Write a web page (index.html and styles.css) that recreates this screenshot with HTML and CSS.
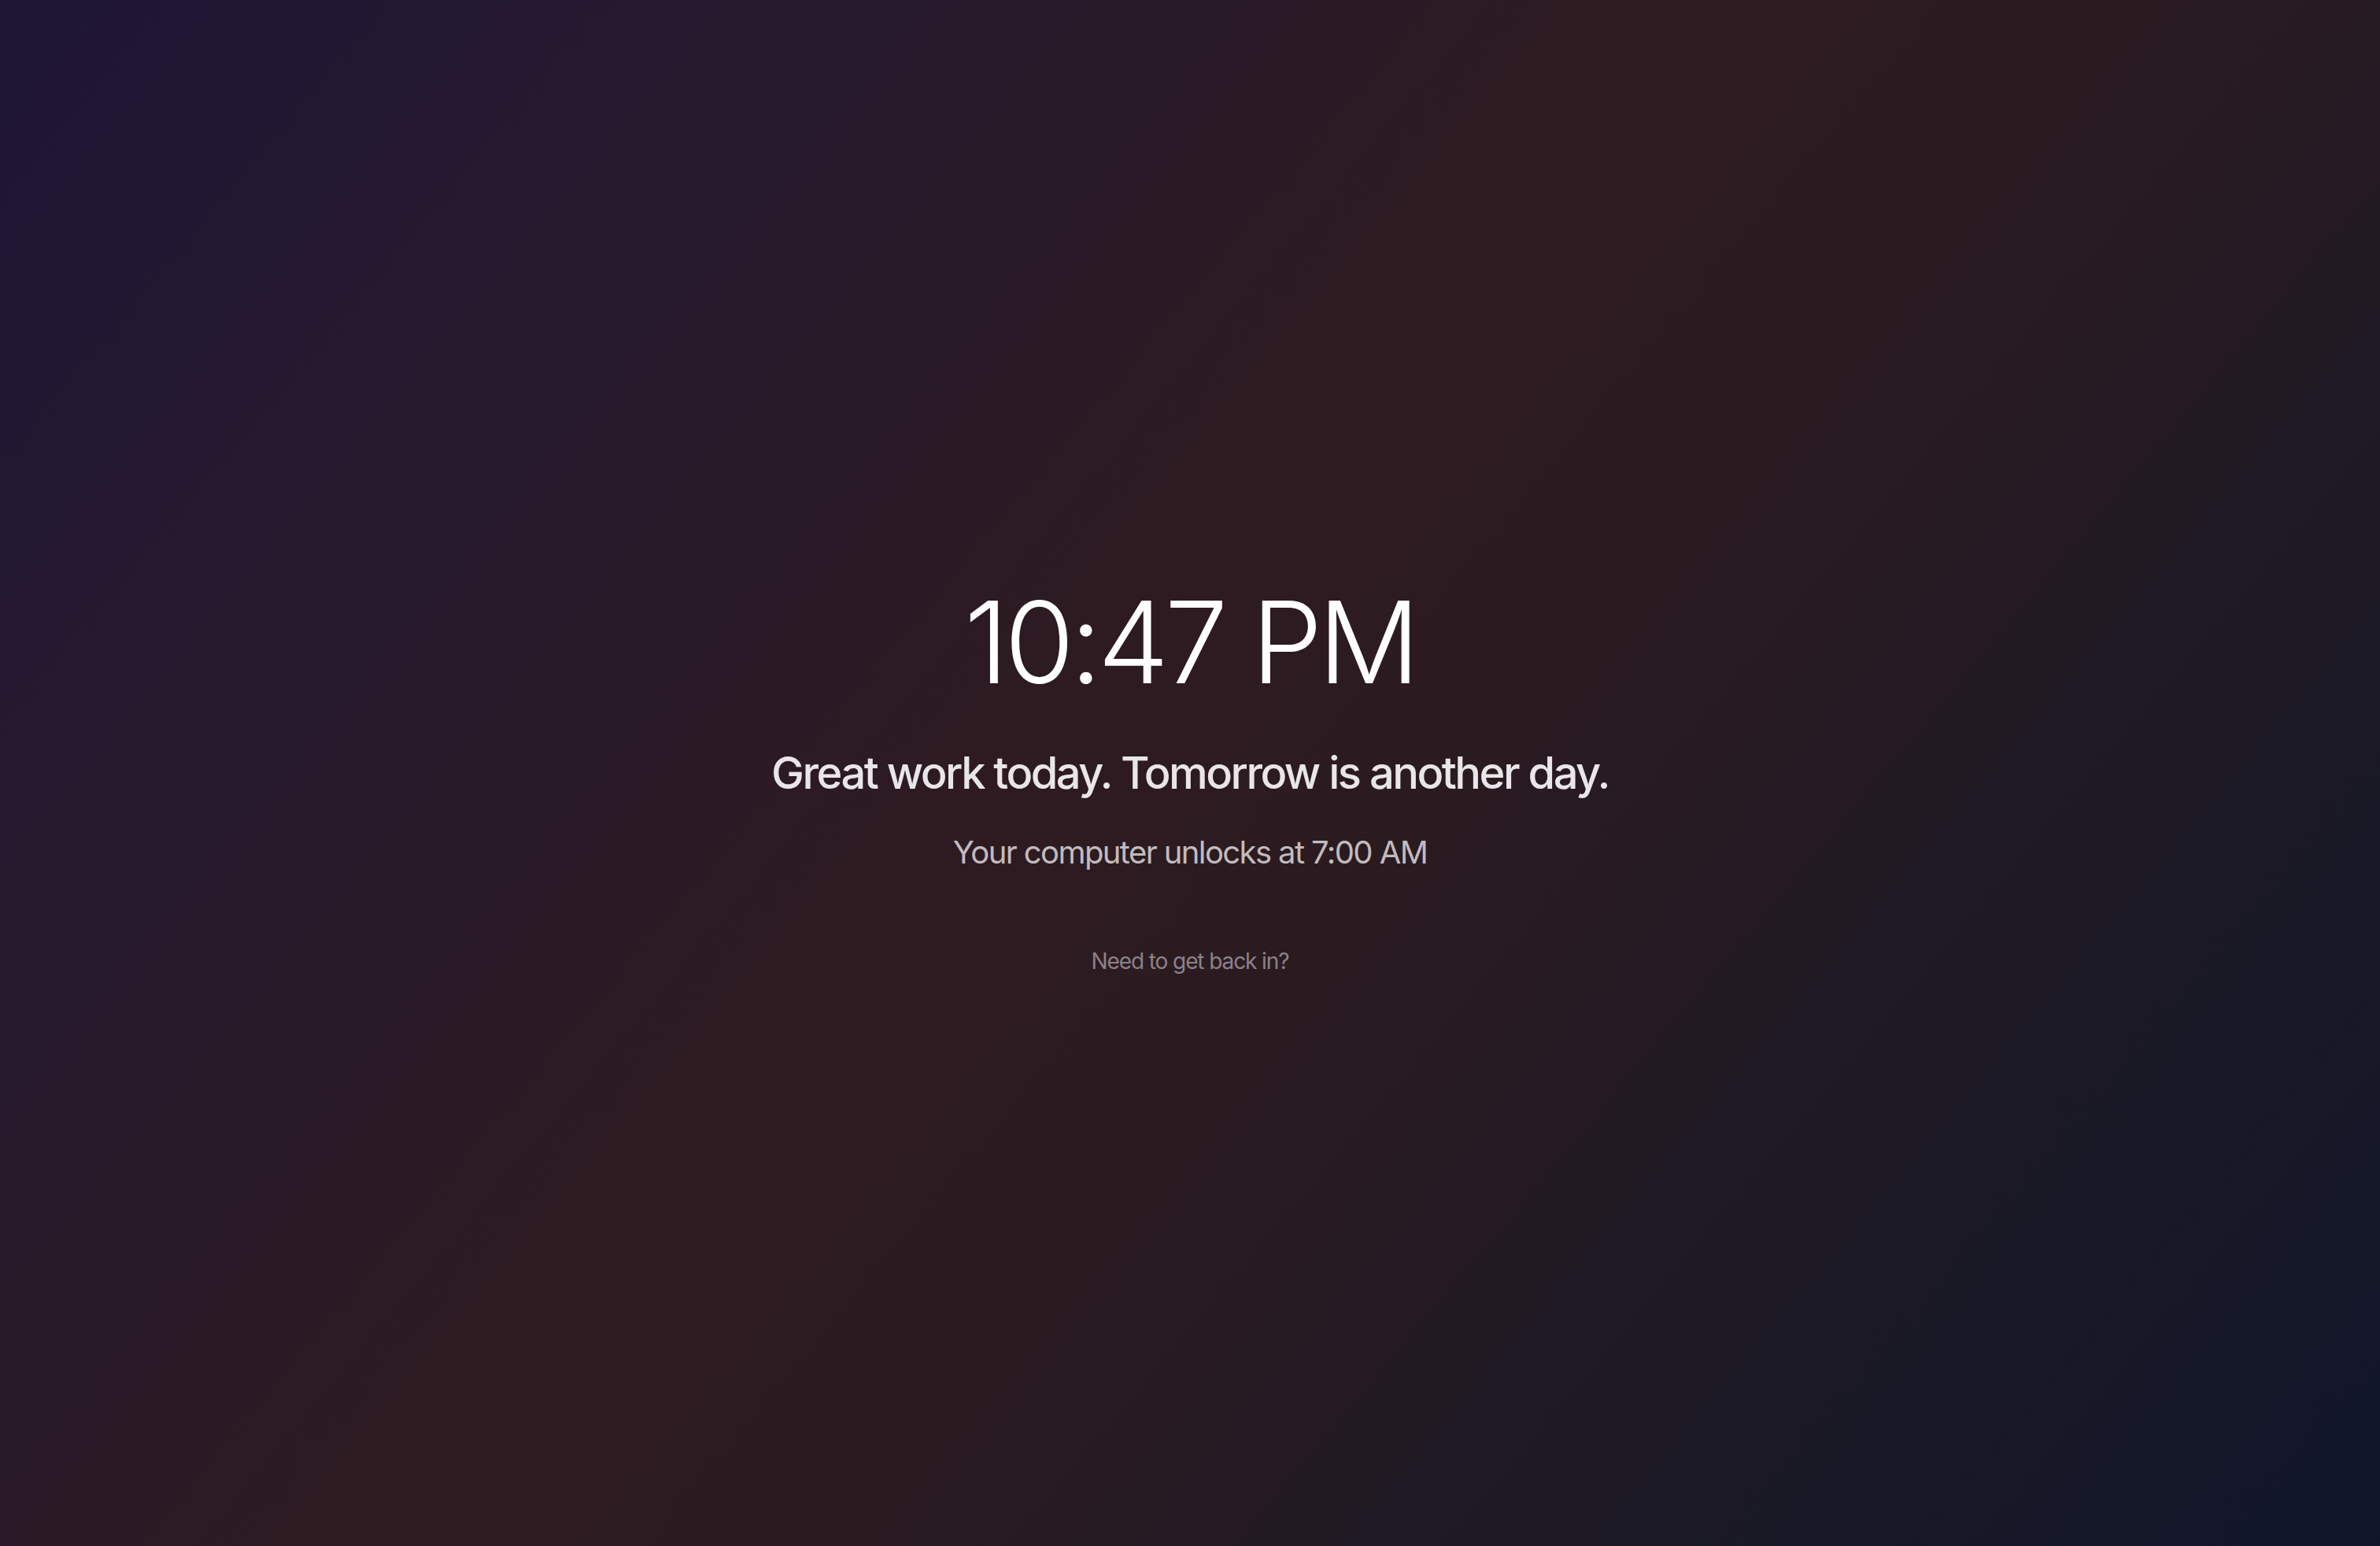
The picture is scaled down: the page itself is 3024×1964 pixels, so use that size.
FILE: index.html
```html
<!DOCTYPE html>
<html lang="en">
<head>
<meta charset="utf-8">
<title>Locked</title>
<link rel="stylesheet" href="styles.css">
</head>
<body>
<main class="screen">
  <div class="content">
    <div class="clock">10:47 PM</div>
    <h1 class="message">Great work today. Tomorrow is another day.</h1>
    <p class="unlock">Your computer unlocks at 7:00 AM</p>
    <a class="back" href="#">Need to get back in?</a>
  </div>
</main>
</body>
</html>
```
FILE: styles.css
```css
html, body {
  margin: 0;
  padding: 0;
  height: 100%;
}
body {
  font-family: Inter, "Noto Sans", "Liberation Sans", sans-serif;
  background: #1e1535;
}
.screen {
  min-height: 100vh;
  display: flex;
  align-items: center;
  justify-content: center;
  background: linear-gradient(130deg,
    #1e1535 0%,
    #261a2f 20%,
    #2a1a27 35%,
    #2e1b21 45%,
    #2b1b20 55%,
    #261a22 65%,
    #1f1a24 73%,
    #10162a 100%);
}
.content {
  display: flex;
  flex-direction: column;
  align-items: center;
  padding-top: 20px;
  text-align: center;
}
.clock {
  font-size: 144px;
  line-height: 144px;
  font-weight: 300;
  color: #ffffff;
  letter-spacing: -5.5px;
}
.message {
  margin: 61px 0 0;
  font-size: 56px;
  line-height: 67px;
  font-weight: 500;
  color: #e9e5e8;
  letter-spacing: -2.5px;
}
.unlock {
  margin: 39px 0 0;
  font-size: 40px;
  line-height: 56px;
  font-weight: 400;
  color: #c2bbbf;
  letter-spacing: -1.6px;
}
.back {
  margin-top: 90px;
  font-size: 28px;
  line-height: 40px;
  font-weight: 400;
  color: #8b8189;
  text-decoration: none;
  letter-spacing: -1.1px;
}
```
